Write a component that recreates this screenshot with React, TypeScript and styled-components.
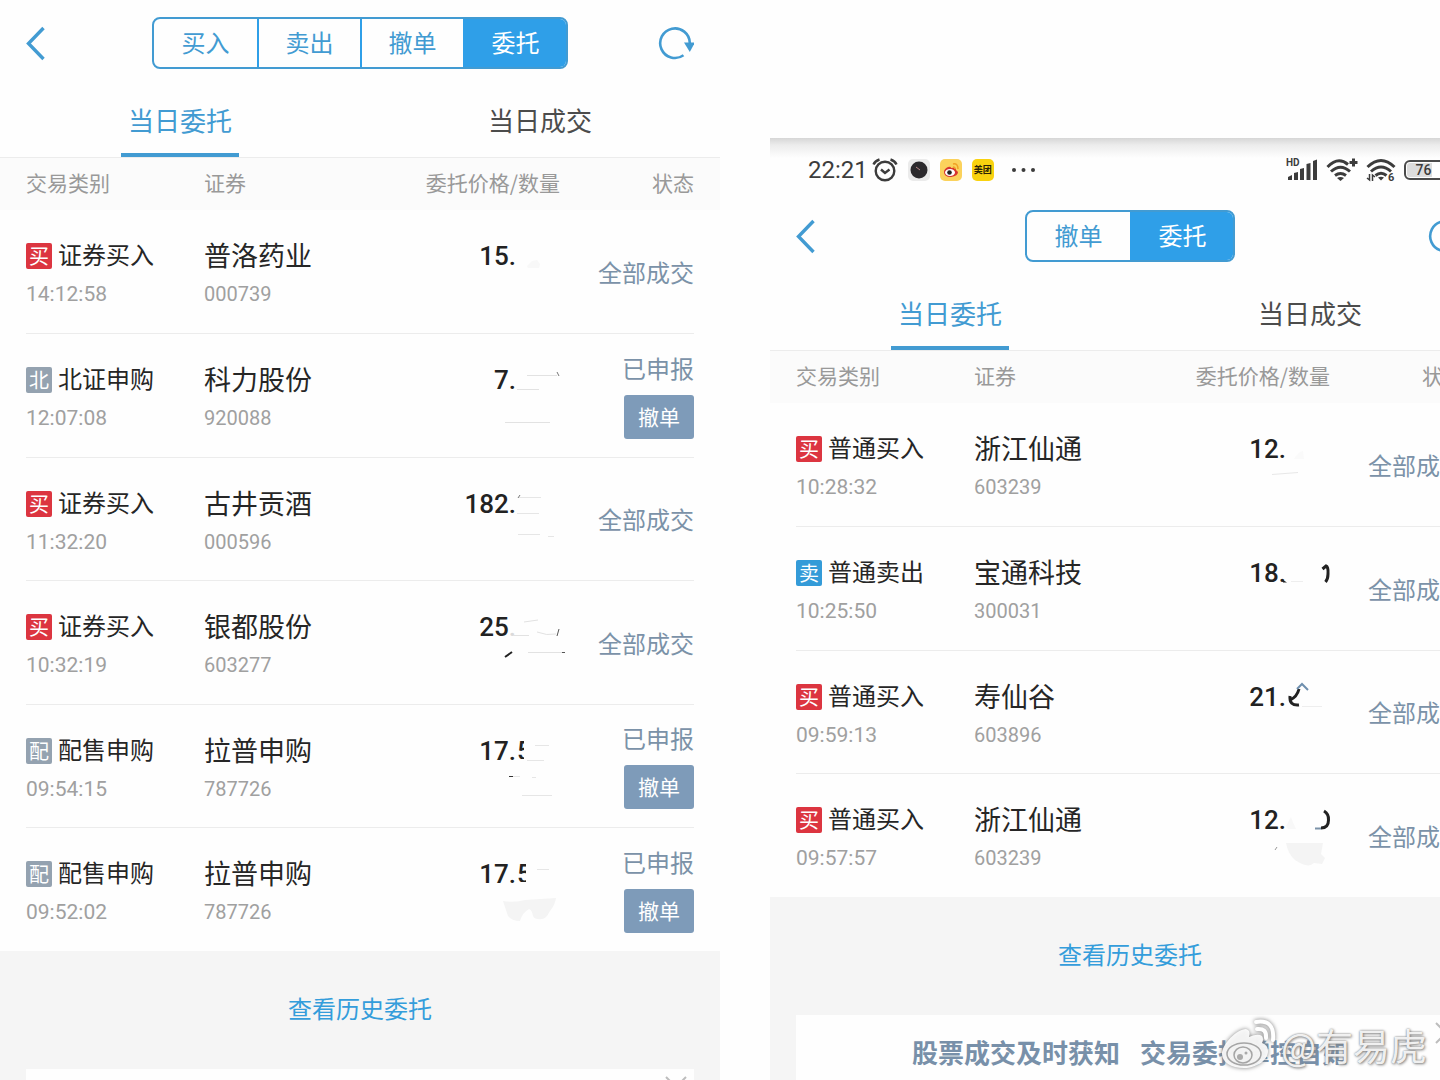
import React from "react";
import styled, { createGlobalStyle } from "styled-components";

const cjk = `"Noto Sans CJK SC", sans-serif`;
const latin = `Roboto, "Noto Sans CJK SC", sans-serif`;

const color = {
  line: "#429bd2",
  fill: "#2f9fe8",
  text: "#262626",
  muted: "#a0a0a0",
  status: "#7b92a8",
  cancel: "#7e9bb9",
  page: "#f5f5f5",
  rule: "#ececec",
};

const badgeColors = { red: "#dc3540", blue: "#349bd8", grey: "#94a2b0" };

const GlobalStyle = createGlobalStyle`
  * { box-sizing: border-box; }
  body { margin: 0; background: #fefefe; font-family: ${cjk}; }
  button { margin: 0; padding: 0; border: 0; background: none; font: inherit; cursor: pointer; }
  a { color: inherit; text-decoration: none; }
`;

const Stage = styled.main`
  position: relative;
  display: flex;
  align-items: flex-start;
  gap: 50px;
  height: 100vh;
  overflow: hidden;
`;

const Panel = styled.section<{ $drop?: boolean }>`
  flex: 0 0 50%;
  min-height: 100%;
  display: flex;
  flex-direction: column;
  padding-top: ${(p) => (p.$drop ? "138px" : "0")};
`;

const StatusBar = styled.header`
  display: flex;
  align-items: center;
  justify-content: space-between;
  height: 55px;
  padding: 8px 40px 0 38px;
  background: linear-gradient(#d6d6d6, #ececec 7px, #fefefe 20px);
  color: #3c3c3c;
`;

const StatusGroup = styled.div<{ $gap: number }>`
  display: flex;
  align-items: center;
  gap: ${(p) => p.$gap}px;
`;

const Clock = styled.time`
  margin-right: -6px;
  font: 400 24px/32px ${latin};
`;

const AppIcon = styled.span<{ $bg: string }>`
  display: grid;
  place-items: center;
  width: 22px;
  height: 22px;
  border-radius: 5px;
  background: ${(p) => p.$bg};
  color: #2b2205;
  font: 700 9px/22px ${cjk};
`;

const Battery = styled.span`
  display: grid;
  place-items: center;
  width: 46px;
  height: 20px;
  border: 2px solid #4a4a4a;
  border-radius: 6px;
  background: linear-gradient(90deg, #dcdcdc 76%, #fefefe 76%) content-box;
  padding: 1px 8px 1px 1px;
  font: 500 14px/14px ${latin};
`;

const TopBar = styled.div`
  display: flex;
  align-items: center;
  justify-content: space-between;
  height: 87px;
  padding: 0 26px 2px;
`;

const IconButton = styled.button`
  display: flex;
  width: 36px;
  height: 36px;
  color: ${color.line};
`;

const Segments = styled.div`
  display: flex;
  border: 2px solid ${color.line};
  border-radius: 8px;
  overflow: hidden;
`;

const Segment = styled.button<{ $active?: boolean }>`
  width: 103px;
  height: 48px;
  padding-bottom: 2px;
  background: ${(p) => (p.$active ? color.fill : "transparent")};
  color: ${(p) => (p.$active ? "#fff" : color.line)};
  font-size: 24px;
  line-height: 46px;

  & + & {
    border-left: 2px solid ${(p) => (p.$active ? color.fill : color.line)};
  }
`;

const Tabs = styled.nav`
  display: flex;
  justify-content: space-around;
  border-bottom: 1px solid ${color.rule};
`;

const TabCell = styled.div`
  flex: 1;
  display: flex;
  justify-content: center;
`;

const Tab = styled.a<{ $active?: boolean }>`
  padding: 0 7px;
  border-bottom: 4px solid ${(p) => (p.$active ? color.line : "transparent")};
  color: ${(p) => (p.$active ? color.line : "#4c4c4c")};
  font-size: 26px;
  line-height: 66px;
`;

const Orders = styled.table`
  display: block;
`;

const Head = styled.thead`
  display: block;
  background: #fbfbfb;
`;

const Body = styled.tbody`
  display: block;
`;

const HeadRow = styled.tr`
  display: grid;
  grid-template-columns: 178px 1fr 178px 134px;
  margin: 0 26px;
`;

const Row = styled(HeadRow)`
  align-items: start;
  height: 123px;

  &:nth-child(even) {
    height: 124px;
  }

  & + & {
    border-top: 1px solid ${color.rule};
  }
`;

const HeadCell = styled.th<{ $end?: boolean }>`
  padding: 0 0 4px;
  color: #999;
  font-size: 21px;
  font-weight: 400;
  line-height: 48px;
  text-align: ${(p) => (p.$end ? "right" : "left")};
`;

const Cell = styled.td`
  padding: 28px 0 0;
`;

const StatusCell = styled.td`
  align-self: center;
  display: flex;
  flex-direction: column;
  align-items: flex-end;
  gap: 12px;
  padding: 0;
  color: ${color.status};
  font-size: 24px;
  line-height: 30px;
  white-space: nowrap;
`;

const Kind = styled.div`
  display: flex;
  align-items: center;
  gap: 6px;
  height: 36px;
  color: ${color.text};
  font-size: 24px;
  line-height: 32px;
`;

const KindName = styled.span`
  height: 36px;
`;

const Badge = styled.span<{ $tone: keyof typeof badgeColors }>`
  width: 26px;
  height: 26px;
  border-radius: 2px;
  background: ${(p) => badgeColors[p.$tone]};
  color: #fff;
  font-size: 20px;
  line-height: 26px;
  text-align: center;
`;

const Security = styled.div`
  height: 36px;
  color: ${color.text};
  font-size: 27px;
  line-height: 34px;
`;

const Detail = styled.div<{ $large?: boolean }>`
  color: ${color.muted};
  font: 400 ${(p) => (p.$large ? 21 : 20)}px/40px ${latin};
`;

const Price = styled.div`
  display: flex;
  justify-content: flex-end;
  color: #222;
  font: 500 26px/36px ${latin};
`;

const Faded = styled.span`
  color: #dadada;
`;

const Erased = styled.span`
  position: relative;
  width: 44px;
  height: 36px;
`;

const Marks = styled.svg`
  position: absolute;
  inset: 0;
  overflow: visible;
`;

const HalfDigit = styled.span<{ $w: number }>`
  display: block;
  width: ${(p) => p.$w}px;
  height: 26px;
  margin-left: 1px;
  overflow: hidden;
`;

const CancelButton = styled.button`
  width: 70px;
  height: 44px;
  padding-bottom: 2px;
  border-radius: 3px;
  background: ${color.cancel};
  color: #fff;
  font-size: 21px;
  line-height: 42px;
`;

const Footer = styled.footer`
  flex: 1;
  display: flex;
  flex-direction: column;
  padding: 0 26px;
  background: ${color.page};
`;

const History = styled.a`
  align-self: center;
  padding-bottom: 4px;
  color: #349ddb;
  font-size: 24px;
  line-height: 114px;
`;

const Promo = styled.div`
  position: relative;
  display: flex;
  justify-content: center;
  gap: 20px;
  flex: 1 0 90px;
  background: #fefefe;
  color: #7890a9;
  font-size: 26px;
  font-weight: 700;
  line-height: 74px;
`;

const Close = styled.button`
  position: absolute;
  top: 7px;
  right: 7px;
  display: flex;
  color: #bdbdbd;
`;

const Watermark = styled.div`
  position: absolute;
  right: 13px;
  bottom: 7px;
  display: flex;
  align-items: center;
  gap: 3px;
  color: rgba(255, 255, 255, 0.9);
  font-size: 37px;
  line-height: 56px;
  text-shadow: 0 0 2px #777, 1px 1px 3px #888;
`;

const WatermarkLogo = styled.svg`
  filter: drop-shadow(0 0 2px #777);
`;

const erasures: Record<string, React.ReactNode> = {
  a: <path d="M11 28l5-5 5-1 3 4-1 4H12z" fill="#f8f8f8" />,
  b: (
    <g stroke="#e2e2e2">
      <path d="M11 13.5h30M1 27.5h22M-11 60.5h45" />
      <path d="M41 10l2 4" stroke="#777" />
    </g>
  ),
  c: (
    <g stroke="#e6e6e6">
      <path d="M3 11.5h22M1 27.5h22M2 48.5h22M32 50.5h6" />
      <path d="M2 12l2-3" stroke="#777" />
    </g>
  ),
  d: (
    <g stroke="#e2e2e2" fill="none">
      <path d="M8 13l14-2M-3 26.5h16M21 23q10 4 19 2M12 43.5h37" />
      <path d="M43 20l-2 7M46 43.5h3" stroke="#555" />
      <path d="M-11 48l7-5" stroke="#222" strokeWidth="2" />
    </g>
  ),
  e: (
    <g stroke="#e6e6e6">
      <path d="M19 12.5h14M11 27.5h17M-3 43.5h7M16 44.5h4M6 62.5h30" />
      <path d="M-7 43.5h4" stroke="#333" />
    </g>
  ),
  f: (
    <g>
      <path d="M21 13.5h12" stroke="#e6e6e6" />
      <path d="M-13 45q12 2 22-1l31-2q-1 7-6 13-4 8-8 8-7 1-9-3-1-6-4-7-7 4-9 12-8 0-12-5-2-6-5-15z" fill="#f4f4f4" />
    </g>
  ),
  g: (
    <g>
      <path d="M-14 43.5l26-2" stroke="#e8e8e8" />
      <path d="M8 28q5-8 9-8l1 8z" fill="#fafafa" />
    </g>
  ),
  h: (
    <g fill="none">
      <path d="M-3 25l4 2.500h-4z" fill="#222" />
      <path d="M5 26.5h12" stroke="#eee" />
      <path d="M36.500 14l3.500-3q2.500 1 2 8 0 5-2.500 8" stroke="#222" strokeWidth="3" />
    </g>
  ),
  i: (
    <g fill="none">
      <path d="M13 10q-2 8-9 11M4 17q-1 10 9 9" stroke="#222" strokeWidth="3" />
      <path d="M11 10l5-5 6 6" stroke="#6f8fae" strokeWidth="2" />
      <path d="M16 27.5h20" stroke="#eee" />
    </g>
  ),
  j: (
    <g fill="none">
      <path d="M38 9q5 3 4.500 9 0 8-7.500 8" stroke="#222" strokeWidth="3" />
      <path d="M29 26.5h6" stroke="#7b92a8" strokeWidth="2" />
      <path d="M0 24l5-9q2 6 5 12H2z" fill="#f8f8f8" />
      <path d="M0 41h37l-2 11 4 4-3 6-8-1q-6 6-19-3Q2 52 0 41z" fill="#f4f4f4" />
      <path d="M-11 48l2-3" stroke="#999" />
    </g>
  ),
};

type Order = {
  badge: string;
  tone: keyof typeof badgeColors;
  kind: string;
  time: string;
  name: string;
  code: string;
  price: string;
  faded?: string;
  half?: number;
  erased: string;
  pending?: boolean;
};

const leftOrders: Order[] = [
  { badge: "买", tone: "red", kind: "证券买入", time: "14:12:58", name: "普洛药业", code: "000739", price: "15.", erased: "a" },
  { badge: "北", tone: "grey", kind: "北证申购", time: "12:07:08", name: "科力股份", code: "920088", price: "7.", erased: "b", pending: true },
  { badge: "买", tone: "red", kind: "证券买入", time: "11:32:20", name: "古井贡酒", code: "000596", price: "182.", erased: "c" },
  { badge: "买", tone: "red", kind: "证券买入", time: "10:32:19", name: "银都股份", code: "603277", price: "25", faded: ".", erased: "d" },
  { badge: "配", tone: "grey", kind: "配售申购", time: "09:54:15", name: "拉普申购", code: "787726", price: "17.", half: 7, erased: "e", pending: true },
  { badge: "配", tone: "grey", kind: "配售申购", time: "09:52:02", name: "拉普申购", code: "787726", price: "17.", half: 9, erased: "f", pending: true },
];

const rightOrders: Order[] = [
  { badge: "买", tone: "red", kind: "普通买入", time: "10:28:32", name: "浙江仙通", code: "603239", price: "12.", erased: "g" },
  { badge: "卖", tone: "blue", kind: "普通卖出", time: "10:25:50", name: "宝通科技", code: "300031", price: "18.", erased: "h" },
  { badge: "买", tone: "red", kind: "普通买入", time: "09:59:13", name: "寿仙谷", code: "603896", price: "21.", erased: "i" },
  { badge: "买", tone: "red", kind: "普通买入", time: "09:57:57", name: "浙江仙通", code: "603239", price: "12.", erased: "j" },
];

function OrderRow({ order }: { order: Order }) {
  return (
    <Row>
      <Cell>
        <Kind>
          <Badge $tone={order.tone}>{order.badge}</Badge>
          <KindName>{order.kind}</KindName>
        </Kind>
        <Detail $large>{order.time}</Detail>
      </Cell>
      <Cell>
        <Security>{order.name}</Security>
        <Detail>{order.code}</Detail>
      </Cell>
      <Cell>
        <Price>
          {order.price}
          {order.faded && <Faded>{order.faded}</Faded>}
          <Erased>
            {order.half && <HalfDigit $w={order.half}>5</HalfDigit>}
            <Marks width="44" height="36" aria-hidden="true">
              {erasures[order.erased]}
            </Marks>
          </Erased>
        </Price>
      </Cell>
      <StatusCell>
        {order.pending ? "已申报" : "全部成交"}
        {order.pending && <CancelButton>撤单</CancelButton>}
      </StatusCell>
    </Row>
  );
}

function OrderScreen({ segments, orders, children }: { segments: string[]; orders: Order[]; children?: React.ReactNode }) {
  return (
    <>
      <TopBar>
        <IconButton aria-label="返回">
          <svg width="36" height="36" viewBox="0 0 36 36" fill="none" stroke="currentColor" strokeWidth="3.4">
            <path d="M17.5 3L2.500 18.500L17.5 34" />
          </svg>
        </IconButton>
        <Segments>
          {segments.map((s) => (
            <Segment key={s} $active={s === "委托"}>
              {s}
            </Segment>
          ))}
        </Segments>
        <IconButton aria-label="刷新">
          <svg width="36" height="36" viewBox="0 0 36 36" fill="none">
            <path d="M25.500 30.300A14.800 14.800 0 1 1 31.800 18" stroke="currentColor" strokeWidth="2.600" />
            <path d="M26 17.500h11L31.800 27z" fill="currentColor" />
          </svg>
        </IconButton>
      </TopBar>
      <Tabs>
        <TabCell>
          <Tab href="#orders" $active>
            当日委托
          </Tab>
        </TabCell>
        <TabCell>
          <Tab href="#deals">当日成交</Tab>
        </TabCell>
      </Tabs>
      <Orders>
        <Head>
          <HeadRow>
            <HeadCell>交易类别</HeadCell>
            <HeadCell>证券</HeadCell>
            <HeadCell $end>委托价格/数量</HeadCell>
            <HeadCell $end>状态</HeadCell>
          </HeadRow>
        </Head>
        <Body>
          {orders.map((o) => (
            <OrderRow key={o.time} order={o} />
          ))}
        </Body>
      </Orders>
      <Footer>
        <History href="#history">查看历史委托</History>
        <Promo>
          {children}
          <Close aria-label="关闭">
            <svg width="22" height="22" viewBox="0 0 22 22" stroke="currentColor" strokeWidth="2">
              <path d="M1 1l20 20M21 1L1 21" />
            </svg>
          </Close>
        </Promo>
      </Footer>
    </>
  );
}

const AlarmIcon = () => (
  <svg width="26" height="24" viewBox="0 0 26 24" fill="none" stroke="currentColor" strokeWidth="2.4">
    <circle cx="13" cy="13" r="9.3" />
    <path d="M9 11.5l4 3.500 4.500-3.500M1.500 6.500Q3 3 7.500 1.500M24.500 6.500Q23 3 18.500 1.500" />
  </svg>
);

const SignalIcon = () => (
  <svg width="32" height="24" viewBox="0 0 32 24" fill="currentColor">
    <text x="0" y="8" fontFamily="Roboto, sans-serif" fontSize="10" fontWeight="700">
      HD
    </text>
    <path d="M2 19l4-2v5H2zM8 15l4-1v8H8zM14 11l4-1v12h-4zM20.500 6l4-1v17h-4zM27 3l4-1.500V22h-4z" />
  </svg>
);

const WifiPlusIcon = () => (
  <svg width="32" height="24" viewBox="0 0 32 24" fill="none" stroke="currentColor" strokeWidth="3">
    <path d="M1.500 9Q12 -2 22 6.500M5 13.500q9.500-8.500 19 0M9 17.500q5.500-4 11 0" />
    <path d="M11 20q3.500-2 7 0l-3.500 3z" fill="currentColor" stroke="none" />
    <path d="M23.500 4.500h8M27.500 .5v8" />
  </svg>
);

const WifiSixIcon = () => (
  <svg width="30" height="24" viewBox="0 0 30 24" fill="none" stroke="currentColor" strokeWidth="3">
    <path d="M1.500 9Q15 -4 28.500 9M5 13.500q10-9 20 0M9.500 17.500q5.500-4.500 11 0" />
    <path d="M12 19.500q3-1.500 6 0l-3 3z" fill="currentColor" stroke="none" />
    <path d="M1 20l2.500 2V16M6.500 23v-6l2.500 2" strokeWidth="1.500" />
    <text x="22" y="23" fontFamily="Roboto, sans-serif" fontSize="11" fontWeight="700" fill="currentColor" stroke="none">
      6
    </text>
  </svg>
);

const WeiboIcon = () => (
  <svg width="22" height="22" viewBox="0 0 22 22" fill="none">
    <path d="M4 13q0-3 4-5 3-1 3 1 5-1 5 2l2 2q0 4-7 5-7 0-7-5z" fill="#d6352f" />
    <ellipse cx="10" cy="13.500" rx="5" ry="3.500" fill="#fff" />
    <circle cx="9.500" cy="13.500" r="2.300" fill="#222" />
    <path d="M13 5q5-1 5 5M13 8q2 0 2 2" stroke="#f0a024" strokeWidth="1.500" />
  </svg>
);

const WeiboMark = () => (
  <WatermarkLogo width="58" height="56" viewBox="0 0 58 56" fill="none">
    <path
      d="M2 37C2 27 17 12 26 12q5 1 3 8 9-4 13-1 2 3 0 7 6 2 6 8c0 9-11 17-24 17S2 45 2 37z"
      fill="#fff"
      fillOpacity=".9"
    />
    <ellipse cx="24" cy="37" rx="17" ry="11" stroke="#a5a5a5" strokeWidth="1.500" />
    <ellipse cx="23" cy="38" rx="9" ry="8" stroke="#a5a5a5" strokeWidth="1.500" />
    <circle cx="20" cy="40" r="3" fill="#aaa" />
    <circle cx="26" cy="36" r="1.500" fill="#aaa" />
    <path d="M36 5q19-3 17 18M37 12q10-1 9 9" stroke="#fff" strokeWidth="4" strokeLinecap="round" />
  </WatermarkLogo>
);

export default function App() {
  return (
    <Stage>
      <GlobalStyle />
      <Panel>
        <OrderScreen segments={["买入", "卖出", "撤单", "委托"]} orders={leftOrders} />
      </Panel>
      <Panel $drop>
        <StatusBar>
          <StatusGroup $gap={10}>
            <Clock>22:21</Clock>
            <AlarmIcon />
            <AppIcon $bg="#ebebeb">
              <svg width="18" height="18" viewBox="0 0 18 18">
                <circle cx="9" cy="9" r="8.500" fill="#2c2a2d" />
                <path d="M6 6l4 3" stroke="#b88" />
              </svg>
            </AppIcon>
            <AppIcon $bg="#fbd25c">
              <WeiboIcon />
            </AppIcon>
            <AppIcon $bg="#f9d20f">美团</AppIcon>
            <svg width="42" height="6" viewBox="0 0 42 6" fill="currentColor">
              <circle cx="10" cy="3" r="2" />
              <circle cx="19.500" cy="3" r="2" />
              <circle cx="29" cy="3" r="2" />
            </svg>
          </StatusGroup>
          <StatusGroup $gap={8}>
            <SignalIcon />
            <WifiPlusIcon />
            <WifiSixIcon />
            <Battery>76</Battery>
          </StatusGroup>
        </StatusBar>
        <OrderScreen segments={["撤单", "委托"]} orders={rightOrders}>
          <span>股票成交及时获知</span>
          <span>交易委托掌控自如</span>
        </OrderScreen>
      </Panel>
      <Watermark>
        <WeiboMark />
        @有易虎
      </Watermark>
    </Stage>
  );
}
